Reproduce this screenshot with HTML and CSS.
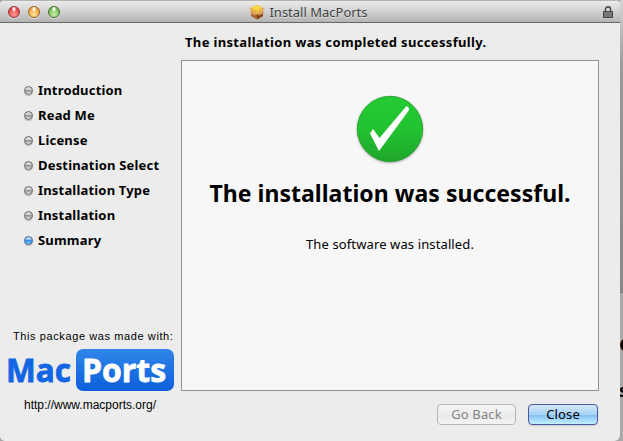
FILE: index.html
```html
<!DOCTYPE html>
<html lang="en">
<head>
<meta charset="utf-8">
<title>Install MacPorts</title>
<link rel="stylesheet" href="styles.css">
</head>
<body>
<div class="desktop">
  <div class="behind"><span class="peek-a">o</span><span class="peek-b">s</span></div>
  <main class="window">
    <header class="titlebar">
      <div class="lights"><i class="light red"></i><i class="light yellow"></i><i class="light green"></i></div>
      <div class="title">
        <svg class="box" width="16" height="16" viewBox="0 0 16 16">
          <path d="M2 7l6 3 6-3v5l-6 3.500-6-3.500z" fill="#a9642b"/>
          <path d="M8 10l6-3v5l-6 3.500z" fill="#844516"/>
          <path d="M2.500 3L8 .8l5.500 2.400V8L8 10.500 2.500 8z" fill="#edc235"/>
          <path d="M3 3.500L8 1.500l5 2.200-5 2z" fill="#f7d951"/>
          <path d="M2.500 6L8 8.700 6 11.500.5 8.500zM13.500 6L8 8.700l2 2.800 5.500-3z" fill="#dfa064"/>
          <path d="M.5 3.700l2.500.5v2.600L1.500 6zM15.500 3.700L13 4.200v2.600l1.500-.8z" fill="#dda576"/>
        </svg>
        <span class="title-text">Install MacPorts</span>
      </div>
      <svg class="lock" width="10" height="12" viewBox="0 0 10 12">
        <path d="M2.500 6V3.300a2.500 2.500 0 0 1 5 0V6" fill="none" stroke="#404040" stroke-width="1.400"/>
        <rect x=".5" y="5.500" width="9" height="6" fill="#777" stroke="#484848"/>
      </svg>
    </header>
    <div class="content">
      <aside class="sidebar">
        <ul class="steps">
          <li><i class="dot"></i><span>Introduction</span></li>
          <li><i class="dot"></i><span>Read Me</span></li>
          <li><i class="dot"></i><span>License</span></li>
          <li><i class="dot"></i><span>Destination Select</span></li>
          <li><i class="dot"></i><span>Installation Type</span></li>
          <li><i class="dot"></i><span>Installation</span></li>
          <li><i class="dot active"></i><span>Summary</span></li>
        </ul>
        <div class="brand">
          <p class="made">This package was made with:</p>
          <div class="logo">
            <svg width="168" height="42" viewBox="0 0 168 42">
              <defs><linearGradient id="blue" x2="0" y2="1"><stop stop-color="#3086e9"/><stop offset="1" stop-color="#0d5edc"/></linearGradient></defs>
              <rect x="69" width="98" height="42" rx="7" fill="url(#blue)"/>
              <text class="logo-text" x="-1" y="33" fill="#1266e3" stroke="#1266e3" textLength="65" lengthAdjust="spacingAndGlyphs">Mac</text>
              <text class="logo-text" x="75" y="33" fill="#fff" stroke="#fff" textLength="84" lengthAdjust="spacingAndGlyphs">Ports</text>
            </svg>
          </div>
          <p class="url">http://www.macports.org/</p>
        </div>
      </aside>
      <section class="main">
        <h1 class="heading">The installation was completed successfully.</h1>
        <div class="panel">
          <svg class="check" width="76" height="76" viewBox="0 0 76 76">
            <defs><linearGradient id="green" x2="0" y2="1"><stop stop-color="#23cb32"/><stop offset=".5" stop-color="#22c331"/><stop offset="1" stop-color="#1fa52b"/></linearGradient></defs>
            <circle cx="38" cy="38" r="32.700" fill="url(#green)" stroke="#269a30" stroke-width=".8"/>
            <path d="M18 42.500l3-4.500 6.500 9L54.500 15l2.500 2-.2 2.500L27 60z" fill="#fff"/>
          </svg>
          <h2 class="success">The installation was successful.</h2>
          <p class="message">The software was installed.</p>
        </div>
        <div class="buttons">
          <button class="btn disabled" disabled><span>Go Back</span></button>
          <button class="btn primary"><span>Close</span></button>
        </div>
      </section>
    </div>
  </main>
</div>
</body>
</html>
```
FILE: styles.css
```css
* { box-sizing: border-box; margin: 0; padding: 0; }
body { width: 623px; height: 441px; overflow: hidden; font-family: "Noto Sans", sans-serif; color: #000; }
.desktop { position: relative; width: 623px; height: 441px; background: #a5a5a5; overflow: hidden; }
.behind { position: absolute; left: 620px; top: 0; width: 3px; height: 441px; background: linear-gradient(#d4d4d4, #999 70px, #888 292px, #777 292px, #777 293px, #aaa 293px); overflow: hidden; }
.peek-a, .peek-b { position: absolute; left: -1px; font: bold 22px/20px "Noto Sans", sans-serif; }
.peek-a { top: 332px; }
.peek-b { top: 381px; font-size: 17px; }
.window { position: relative; width: 620px; height: 441px; background: #ececec; border-radius: 5px 5px 6px 5px; overflow: hidden; }
.titlebar { display: grid; grid-template-columns: 108px 1fr 112px; height: 23px; padding: 1px 7px 0 8px; align-items: center; border-top: 1px solid #b5b5b5; border-bottom: 1px solid #686868; background: linear-gradient(#eaeaea, #d4d4d4 45%, #b4b4b4); }
.lights { display: flex; gap: 8px; }
.light { width: 12px; height: 12px; border-radius: 50%; border: 1px solid; box-shadow: 0 1px 0 #ddd; }
.red { background: radial-gradient(ellipse at 50% 20%, #fff0ee 0 12%, transparent 30%), radial-gradient(circle at 50% 75%, #ff9d99, #e34141 70%); border-color: #953836; }
.yellow { background: radial-gradient(ellipse at 50% 20%, #fffbe9 0 12%, transparent 30%), radial-gradient(circle at 50% 75%, #ffe59b, #eba13d 70%); border-color: #996026; }
.green { background: radial-gradient(ellipse at 50% 20%, #f7fff1 0 12%, transparent 30%), radial-gradient(circle at 50% 75%, #c8efa5, #78b850 70%); border-color: #497334; }
.title { display: flex; justify-content: center; align-items: center; gap: 4px; }
.title-text { font-size: 13px; line-height: 18px; color: #424242; text-shadow: 0 1px 0 #e2e2e2; white-space: nowrap; }
.lock { justify-self: end; }
.content { display: flex; height: 418px; }
.sidebar { width: 181px; padding-top: 55px; display: flex; flex-direction: column; }
.steps { list-style: none; padding-left: 24px; }
.steps li { display: flex; align-items: center; gap: 5px; height: 25px; font-size: 13px; font-weight: bold; letter-spacing: .18px; white-space: nowrap; }
.steps span { padding-bottom: 2px; }
.dot { width: 9px; height: 9px; border: 1px solid #686868; border-radius: 50%; background: linear-gradient(#d8d8d8 0 35%, #8a8a8a 45%, #e6e6e6); box-shadow: 0 1px 1px #bbb; }
.dot.active { border-color: #3b6296; background: linear-gradient(#b9daf8 0 30%, #318bdf 45%, #7fcdff); }
.brand { padding: 75px 0 0 7px; }
.made { font: 11px/16px "Liberation Sans", sans-serif; padding-left: 6px; letter-spacing: .6px; white-space: nowrap; }
.logo { height: 42px; margin-top: 5px; }
.logo svg { display: block; overflow: visible; }
.logo-text { font: bold 33px "Open Sans", sans-serif; stroke-width: .8px; }
.url { font: 12px/16px "Liberation Sans", sans-serif; padding-left: 17px; margin-top: 6px; white-space: nowrap; }
.main { width: 418px; }
.heading { height: 37px; padding: 10px 0 0 4px; font-size: 13px; line-height: 18px; letter-spacing: .34px; white-space: nowrap; }
.panel { height: 331px; border: 1px solid #919191; background: #f7f7f7; display: flex; flex-direction: column; align-items: center; padding-top: 30px; }
.check { display: block; filter: drop-shadow(0 1px 1px #aaa); }
.success { margin-top: 8px; font-size: 23px; line-height: 36px; letter-spacing: .04px; white-space: nowrap; }
.message { margin-top: 24px; font-size: 13px; line-height: 18px; letter-spacing: .12px; white-space: nowrap; }
.buttons { display: flex; justify-content: flex-end; gap: 12px; padding: 13px 1px 0 0; }
.btn { height: 21px; border-radius: 4px; border: 1px solid; font: 13px/18px "Noto Sans", sans-serif; white-space: nowrap; }
.btn span { position: relative; top: -1px; }
.disabled { width: 79px; color: #858585; letter-spacing: .15px; border-color: #b7b7b7; background: linear-gradient(#f5f5f5, #ececec 50%, #e8e8e8 50%, #f4f4f4); }
.primary { width: 70px; color: #000; letter-spacing: .15px; border-color: #4e569d; background: linear-gradient(#d3e8fa, #a8d2f6 50%, #83bff4 52%, #c4f0ff); box-shadow: 0 1px 1px #ccc; }
```
